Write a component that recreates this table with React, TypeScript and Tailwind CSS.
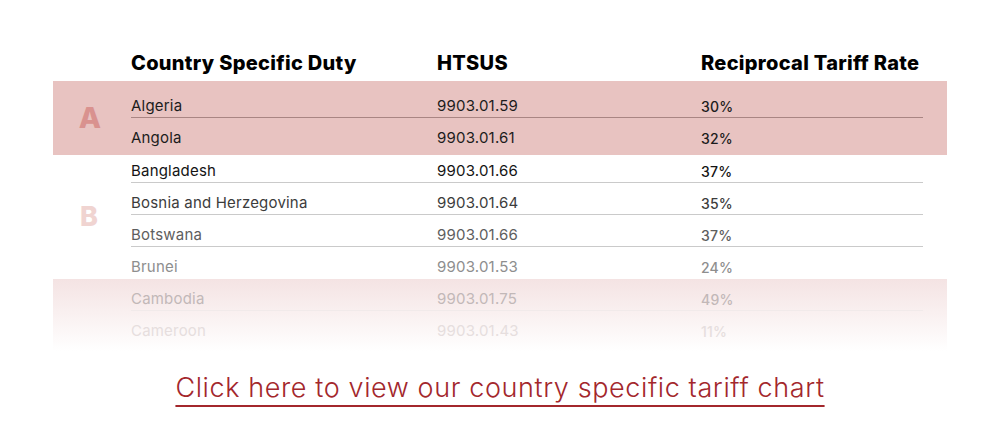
const groupA = [
  { name: "Algeria", code: "9903.01.59", rate: "30%" },
  { name: "Angola", code: "9903.01.61", rate: "32%" },
];

const groupB = [
  { name: "Bangladesh", code: "9903.01.66", rate: "37%", color: "text-[#141414]" },
  { name: "Bosnia and Herzegovina", code: "9903.01.64", rate: "35%", color: "text-[#3c3c3c]" },
  { name: "Botswana", code: "9903.01.66", rate: "37%", color: "text-[#5e5e5e]" },
  { name: "Brunei", code: "9903.01.53", rate: "24%", color: "text-[#8e8e8e]" },
];

const faded = [
  { name: "Cambodia", code: "9903.01.75", rate: "49%", color: "text-[#c2b8b8]" },
  { name: "Cameroon", code: "9903.01.43", rate: "11%", color: "text-[#e6dede]" },
];

const body = { fontFamily: "Inter, 'Noto Sans', sans-serif" };

function Row({
  name,
  code,
  rate,
  color,
  size,
}: {
  name: string;
  code: string;
  rate: string;
  color: string;
  size: string;
}) {
  return (
    <div className={`flex items-center text-[15px] tracking-[0.2px] ${size} ${color}`} style={body}>
      <div className="w-[306px]">{name}</div>
      <div className="w-[264px]">{code}</div>
      <div className="font-medium text-[14px]">{rate}</div>
    </div>
  );
}

export default function App() {
  return (
    <div className="w-[1000px] h-[432px] bg-white overflow-hidden">
      <div className="px-[53px] pt-[44px]">
        {/* header */}
        <div className="flex h-[37px] items-center pl-[78px] text-[20px] tracking-[0.3px] font-extrabold text-black" style={body}>
          <div className="w-[306px]">Country Specific Duty</div>
          <div className="w-[264px]">HTSUS</div>
          <div>Reciprocal Tariff Rate</div>
        </div>

        {/* A */}
        <div className="flex bg-[#e8c3c1] py-[5px]">
          <div className="w-[74px] flex items-center justify-center text-[29px] font-extrabold text-[#d9928f]" style={body}>
            A
          </div>
          <div className="flex-1 pl-[4px] pr-[24px]">
            <Row {...groupA[0]} color="text-[#1c1c1c]" size="h-[32px] pt-[9px] border-b border-[#a98583]" />
            <Row {...groupA[1]} color="text-[#1c1c1c]" size="h-[32px] pt-[9px]" />
          </div>
        </div>

        {/* B */}
        <div className="flex">
          <div className="w-[72px] flex items-center justify-center text-[27px] font-extrabold text-[#f0d4d1]" style={body}>
            B
          </div>
          <div className="flex-1 pl-[6px] pr-[24px]">
            {groupB.map((r, i) => (
              <Row
                key={r.name}
                {...r}
                size={
                  i === 0
                    ? "h-[28px] pt-[5px] border-b border-[#cacaca]"
                    : i < 3
                      ? "h-[32px] pt-[9px] border-b border-[#cacaca]"
                      : "h-[32px] pt-[9px]"
                }
              />
            ))}
          </div>
        </div>

        {/* fade */}
        <div className="flex bg-gradient-to-b from-[#f4e3e3] to-white pb-[8px]">
          <div className="w-[78px]" />
          <div className="flex-1 pr-[24px]">
            {faded.map((r, i) => (
              <Row
                key={r.name}
                {...r}
                size={i === 0 ? "h-[32px] pt-[9px] border-b border-[#f1eaea]" : "h-[32px] pt-[9px]"}
              />
            ))}
          </div>
        </div>
      </div>

      <div className="flex justify-center pt-[20px]">
        <a
          href="#"
          className="text-[27px] tracking-[0.6px] font-light text-[#a3272c] underline decoration-[1.5px] underline-offset-[8px] leading-[34px]"
          style={{ fontFamily: "Inter, 'Noto Sans', sans-serif" }}
        >
          Click here to view our country specific tariff chart
        </a>
      </div>
    </div>
  );
}
